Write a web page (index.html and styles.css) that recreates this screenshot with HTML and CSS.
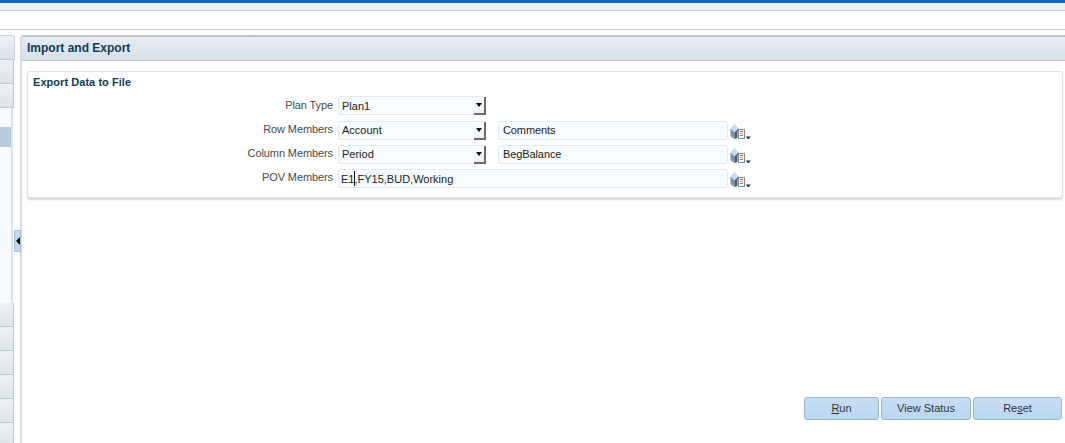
FILE: index.html
```html
<!DOCTYPE html>
<html lang="en">
<head>
<meta charset="utf-8">
<title>Import and Export</title>
<link rel="stylesheet" href="styles.css">
</head>
<body>
<svg class="defs" width="0" height="0" aria-hidden="true">
  <symbol id="member" viewBox="0 0 21 16">
    <path d="M4.500 0l4 4.500-4 4-4-4z" fill="#c6d9f6"/>
    <path d="M.5 4.500l4 4v6.500l-4-3z" fill="#8090ac"/>
    <path d="M4.500 8.500l4-4v2.500h-1v7l-3 1z" fill="#47597c"/>
    <rect x="8.500" y="5.500" width="6" height="9" fill="#fff" stroke="#7c8898"/>
    <path d="M10 7h3v1h-3z" fill="#d8453a"/>
    <path d="M10 9h3v1h-3z" fill="#e3b63a"/>
    <path d="M10 11h3v1h-3z" fill="#57a84f"/>
    <path d="M15.500 12.500h5.500l-2.750 3z" fill="#2d3a4c"/>
  </symbol>
</svg>
<header class="topbar"></header>
<div class="subbar"></div>
<div class="workspace">
  <aside class="side">
    <div class="side-head"></div>
    <div class="side-tab"></div>
    <div class="side-tab"></div>
    <div class="side-list"><div class="side-sel"></div></div>
    <div class="side-tab"></div>
    <div class="side-tab"></div>
    <div class="side-tab"></div>
    <div class="side-tab"></div>
    <div class="side-tab"></div>
    <div class="side-tab"></div>
  </aside>
  <div class="splitter"><span class="collapse"><span class="tri"></span></span></div>
  <main class="panel">
    <h1 class="panel-head">Import and Export</h1>
    <div class="panel-body">
      <section class="card">
        <h2 class="card-title">Export Data to File</h2>
        <div class="form">
          <label class="lbl first">Plan Type</label>
          <div class="select first"><span>Plan1</span><b class="arrow"></b></div>
          <span></span><span></span>

          <label class="lbl">Row Members</label>
          <div class="select"><span>Account</span><b class="arrow"></b></div>
          <div class="input">Comments</div>
          <svg class="ico"><use href="#member"/></svg>

          <label class="lbl">Column Members</label>
          <div class="select"><span>Period</span><b class="arrow"></b></div>
          <div class="input">BegBalance</div>
          <svg class="ico"><use href="#member"/></svg>

          <label class="lbl">POV Members</label>
          <div class="input wide">E1<i class="caret"></i>,FY15,BUD,Working</div>
          <svg class="ico"><use href="#member"/></svg>
        </div>
      </section>
      <div class="actions">
        <button class="btn run" type="button"><u>R</u>un</button>
        <button class="btn status" type="button">View Status</button>
        <button class="btn reset" type="button">Re<u>s</u>et</button>
      </div>
    </div>
  </main>
</div>
</body>
</html>
```
FILE: styles.css
```css
* { box-sizing: border-box; }
html, body { margin: 0; height: 443px; overflow: hidden; background: #fff; }
body { font-family: "Liberation Sans", Arial, sans-serif; font-size: 11px; color: #333; display: flex; flex-direction: column; }
.defs { position: absolute; }
.topbar { height: 11px; flex: none; background: #edf2f6; border-top: 3px solid #1464b4; border-bottom: 1px solid #c3cad3; }
.subbar { height: 19px; flex: none; background: #fff; border-bottom: 1px solid #c9d0d8; }
.workspace { flex: 1; display: flex; padding-top: 5px; min-height: 0; }

.side { width: 15px; flex: none; display: flex; flex-direction: column; }
.side-head { height: 25px; flex: none; border: 1px solid #c9d2dc; border-left: 0; border-radius: 0 3px 0 0; background: linear-gradient(#eef2f6, #dbe2ea); border-bottom-color: #bcc8d4; }
.side-tab { height: 24px; flex: none; width: 14px; border-right: 1px solid #bcc8d4; border-bottom: 1px solid #bcc8d4; background: linear-gradient(#eef2f6, #dce3ea); }
.side-list { height: 195px; flex: none; width: 13px; background: #f7faff; border-right: 2px solid #dde3ea; padding-top: 19px; }
.side-sel { height: 20px; background: #bccce0; }

.splitter { width: 5px; flex: none; position: relative; }
.collapse { position: absolute; left: -1px; top: 195px; width: 7px; height: 22px; background: #c3daf3; border: 1px solid #a5c3e3; display: flex; align-items: center; justify-content: center; }
.tri { width: 0; height: 0; border-style: solid; border-width: 4px 4px 4px 0; border-color: transparent #000 transparent transparent; }

.panel { flex: 1; min-width: 0; display: flex; flex-direction: column; border-top: 2px solid #bdc6cf; border-left: 2px solid #d5dce6; border-radius: 3px 0 0 0; }
.panel-head { margin: 0; height: 24px; flex: none; padding: 1px 0 0 5px; font-size: 12px; line-height: 20px; font-weight: bold; color: #0b3c5c; background: linear-gradient(#e8edf2, #d8e0e8); border-bottom: 1px solid #bcc6d0; }
.panel-body { flex: 1; display: flex; flex-direction: column; padding: 10px 2px 0 5px; min-height: 0; }

.card { height: 127px; flex: none; border: 1px solid #dde3e8; border-radius: 3px; box-shadow: 0 2px 2px #d4d9de; padding: 3px 0 0 5px; background: #fff; }
.card-title { margin: 0; font-size: 11px; line-height: 14px; font-weight: bold; color: #0b3c5c; letter-spacing: .05px; }
.form { display: grid; grid-template-columns: 305px 148px 242px 22px; grid-template-rows: 20px 19px 19px 19px; row-gap: 5px; margin-top: 7px; align-items: start; }
.lbl { text-align: right; padding-right: 5px; color: #4a4a4a; line-height: 19px; letter-spacing: -.1px; margin-top: -1px; }
.lbl.first { margin-top: 0; }
.select, .input { height: 19px; border: 1px solid #e3e9ef; border-radius: 3px; background: #f8fcff; color: #222; display: flex; align-items: center; font-size: 11px; white-space: nowrap; }
.select { justify-content: space-between; padding-left: 3px; }
.select span { margin-bottom: 2px; }
.select.first span { margin-bottom: 0; }
.input { margin-left: 12px; padding: 0 0 2px 4px; letter-spacing: -.1px; }
.input.wide { grid-column: span 2; margin-left: 0; padding: 0 0 0 2px; letter-spacing: 0; }
.arrow { width: 12px; height: 18px; margin-right: -1px; background: linear-gradient(#fff, #eee); border-right: 2px solid #6a6d70; border-bottom: 2px solid #6a6d70; position: relative; flex: none; }
.arrow::after { content: ""; position: absolute; left: 2px; top: 6px; border-style: solid; border-width: 4px 3.500px 0; border-color: #000 transparent transparent; }
.caret { display: inline-block; width: 1px; height: 15px; background: #111; margin-right: -1px; }
.ico { width: 21px; height: 16px; margin: 3px 0 0 2px; }

.actions { margin-top: auto; margin-bottom: 23px; padding-right: 1px; display: flex; gap: 2px; justify-content: flex-end; }
.btn { height: 23px; padding: 0 0 2px; font: 11px "Liberation Sans", Arial, sans-serif; color: #333; background: linear-gradient(#c8def5, #bcd6f1); border: 1px solid #94b7d8; border-radius: 3px; }
.run { width: 75px; }
.status { width: 90px; }
.reset { width: 89px; }
```
